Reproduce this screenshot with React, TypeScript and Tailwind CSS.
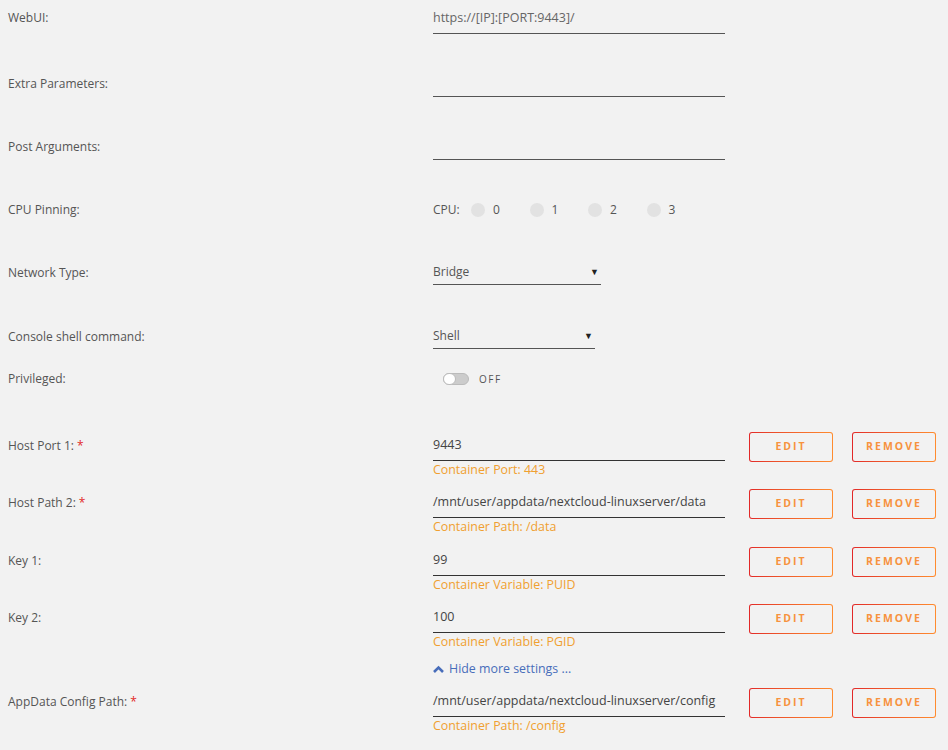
import React from "react";

const font = { fontFamily: '"Open Sans", "Liberation Sans", sans-serif' };

function Label({ text, required, pt }: { text: string; required?: boolean; pt: string }) {
  return (
    <div className={`w-[433px] shrink-0 pl-[8px] leading-[16px] text-[12px] text-[#555] ${pt}`}>
      {text}
      {required && <span className="ml-[3px] text-[#e22828]">*</span>}
    </div>
  );
}

function TextField({ value, dark }: { value?: string; dark?: boolean }) {
  return (
    <div
      className={`h-[32px] w-[292px] border-b pt-[8px] leading-[16px] text-[12.5px] ${
        dark ? "border-[#333] text-[#444]" : "border-[#555] text-[#666]"
      }`}
    >
      {value}
    </div>
  );
}

function SelectField({ value, width }: { value: string; width: string }) {
  return (
    <div
      className={`flex h-[26px] items-start justify-between border-b border-[#555] pt-[5px] leading-[16px] text-[12px] text-[#555] ${width}`}
    >
      <span>{value}</span>
      <span className="mr-[2px] text-[9px] text-[#222]">▼</span>
    </div>
  );
}

function GradButton({ text }: { text: string }) {
  return (
    <div className="h-[30px] w-[84px] rounded-[3px] bg-gradient-to-r from-[#e22828] to-[#ff8c2f] p-[1px]">
      <div className="flex h-full w-full items-center justify-center rounded-[2px] bg-[#f2f2f2] text-[10.5px] font-bold tracking-[2px] text-[#f7923e]">
        {text}
      </div>
    </div>
  );
}

function HostRow({
  label,
  value,
  sub,
  height,
}: {
  label: string;
  value: string;
  sub: string;
  height: string;
}) {
  const required = label.startsWith("Host") || label.startsWith("AppData");
  return (
    <div className={`flex items-start ${height}`}>
      <Label text={label} required={required} pt="pt-[9px]" />
      <div className="flex items-start">
        <div className="flex flex-col">
          <TextField value={value} dark />
          <div className="mt-[1px] leading-[16px] text-[12.4px] text-[#f0a030]">{sub}</div>
        </div>
        <div className="ml-[24px] mt-[3px] flex gap-[19px]">
          <GradButton text="EDIT" />
          <GradButton text="REMOVE" />
        </div>
      </div>
    </div>
  );
}

export default function App() {
  return (
    <div className="min-h-[750px] w-[948px] bg-[#f2f2f2] pt-[2px]" style={font}>
      <div className="flex h-[63px] items-start">
        <Label text="WebUI:" pt="pt-[8px]" />
        <TextField value="https://[IP]:[PORT:9443]/" />
      </div>
      <div className="flex h-[63px] items-start">
        <Label text="Extra Parameters:" pt="pt-[11px]" />
        <TextField />
      </div>
      <div className="flex h-[63px] items-start">
        <Label text="Post Arguments:" pt="pt-[11px]" />
        <TextField />
      </div>
      {/* CPU pinning */}
      <div className="flex h-[68px] items-start pt-[11px]">
        <Label text="CPU Pinning:" pt="pt-0" />
        <div className="flex items-center leading-[16px] text-[12px] text-[#555]">
          <span className="w-[38px]">CPU:</span>
          {["0", "1", "2", "3"].map((n) => (
            <div key={n} className="flex w-[58.5px] items-center">
              <span className="h-[14px] w-[14px] rounded-full bg-[#e2e2e2]" />
              <span className="ml-[8px]">{n}</span>
            </div>
          ))}
        </div>
      </div>
      <div className="flex h-[64px] items-start">
        <Label text="Network Type:" pt="pt-[6px]" />
        <SelectField value="Bridge" width="w-[168px]" />
      </div>
      <div className="flex h-[48px] items-start">
        <Label text="Console shell command:" pt="pt-[6px]" />
        <SelectField value="Shell" width="w-[162px]" />
      </div>
      {/* Privileged */}
      <div className="flex h-[58px] items-start">
        <Label text="Privileged:" pt="pt-0" />
        <div className="flex h-[16px] items-center pl-[10px]">
          <div className="relative h-[12px] w-[26px] rounded-full border border-[#bbb] bg-[#ccc]">
            <span className="absolute left-[-1px] top-[-1px] h-[12px] w-[13px] rounded-full border border-[#bbb] bg-white" />
          </div>
          <span className="ml-[10px] text-[10px] tracking-[1.5px] text-[#555]">OFF</span>
        </div>
      </div>
      <HostRow label="Host Port 1:" value="9443" sub="Container Port: 443" height="h-[57px]" />
      <HostRow
        label="Host Path 2:"
        value="/mnt/user/appdata/nextcloud-linuxserver/data"
        sub="Container Path: /data"
        height="h-[58px]"
      />
      <HostRow label="Key 1:" value="99" sub="Container Variable: PUID" height="h-[57px]" />
      <HostRow label="Key 2:" value="100" sub="Container Variable: PGID" height="h-[58px]" />
      <div className="flex h-[26px] items-start pt-[2px]">
        <div className="w-[433px] shrink-0" />
        <div className="flex items-center leading-[16px] text-[12.4px] text-[#486dba]">
          <svg width="11" height="8" viewBox="0 0 11 8" className="mr-[5px]">
            <path d="M1 7 L5.5 2.5 L10 7" fill="none" stroke="#486dba" strokeWidth="2.6" />
          </svg>
          Hide more settings ...
        </div>
      </div>
      <HostRow
        label="AppData Config Path:"
        value="/mnt/user/appdata/nextcloud-linuxserver/config"
        sub="Container Path: /config"
        height="h-[65px]"
      />
    </div>
  );
}
